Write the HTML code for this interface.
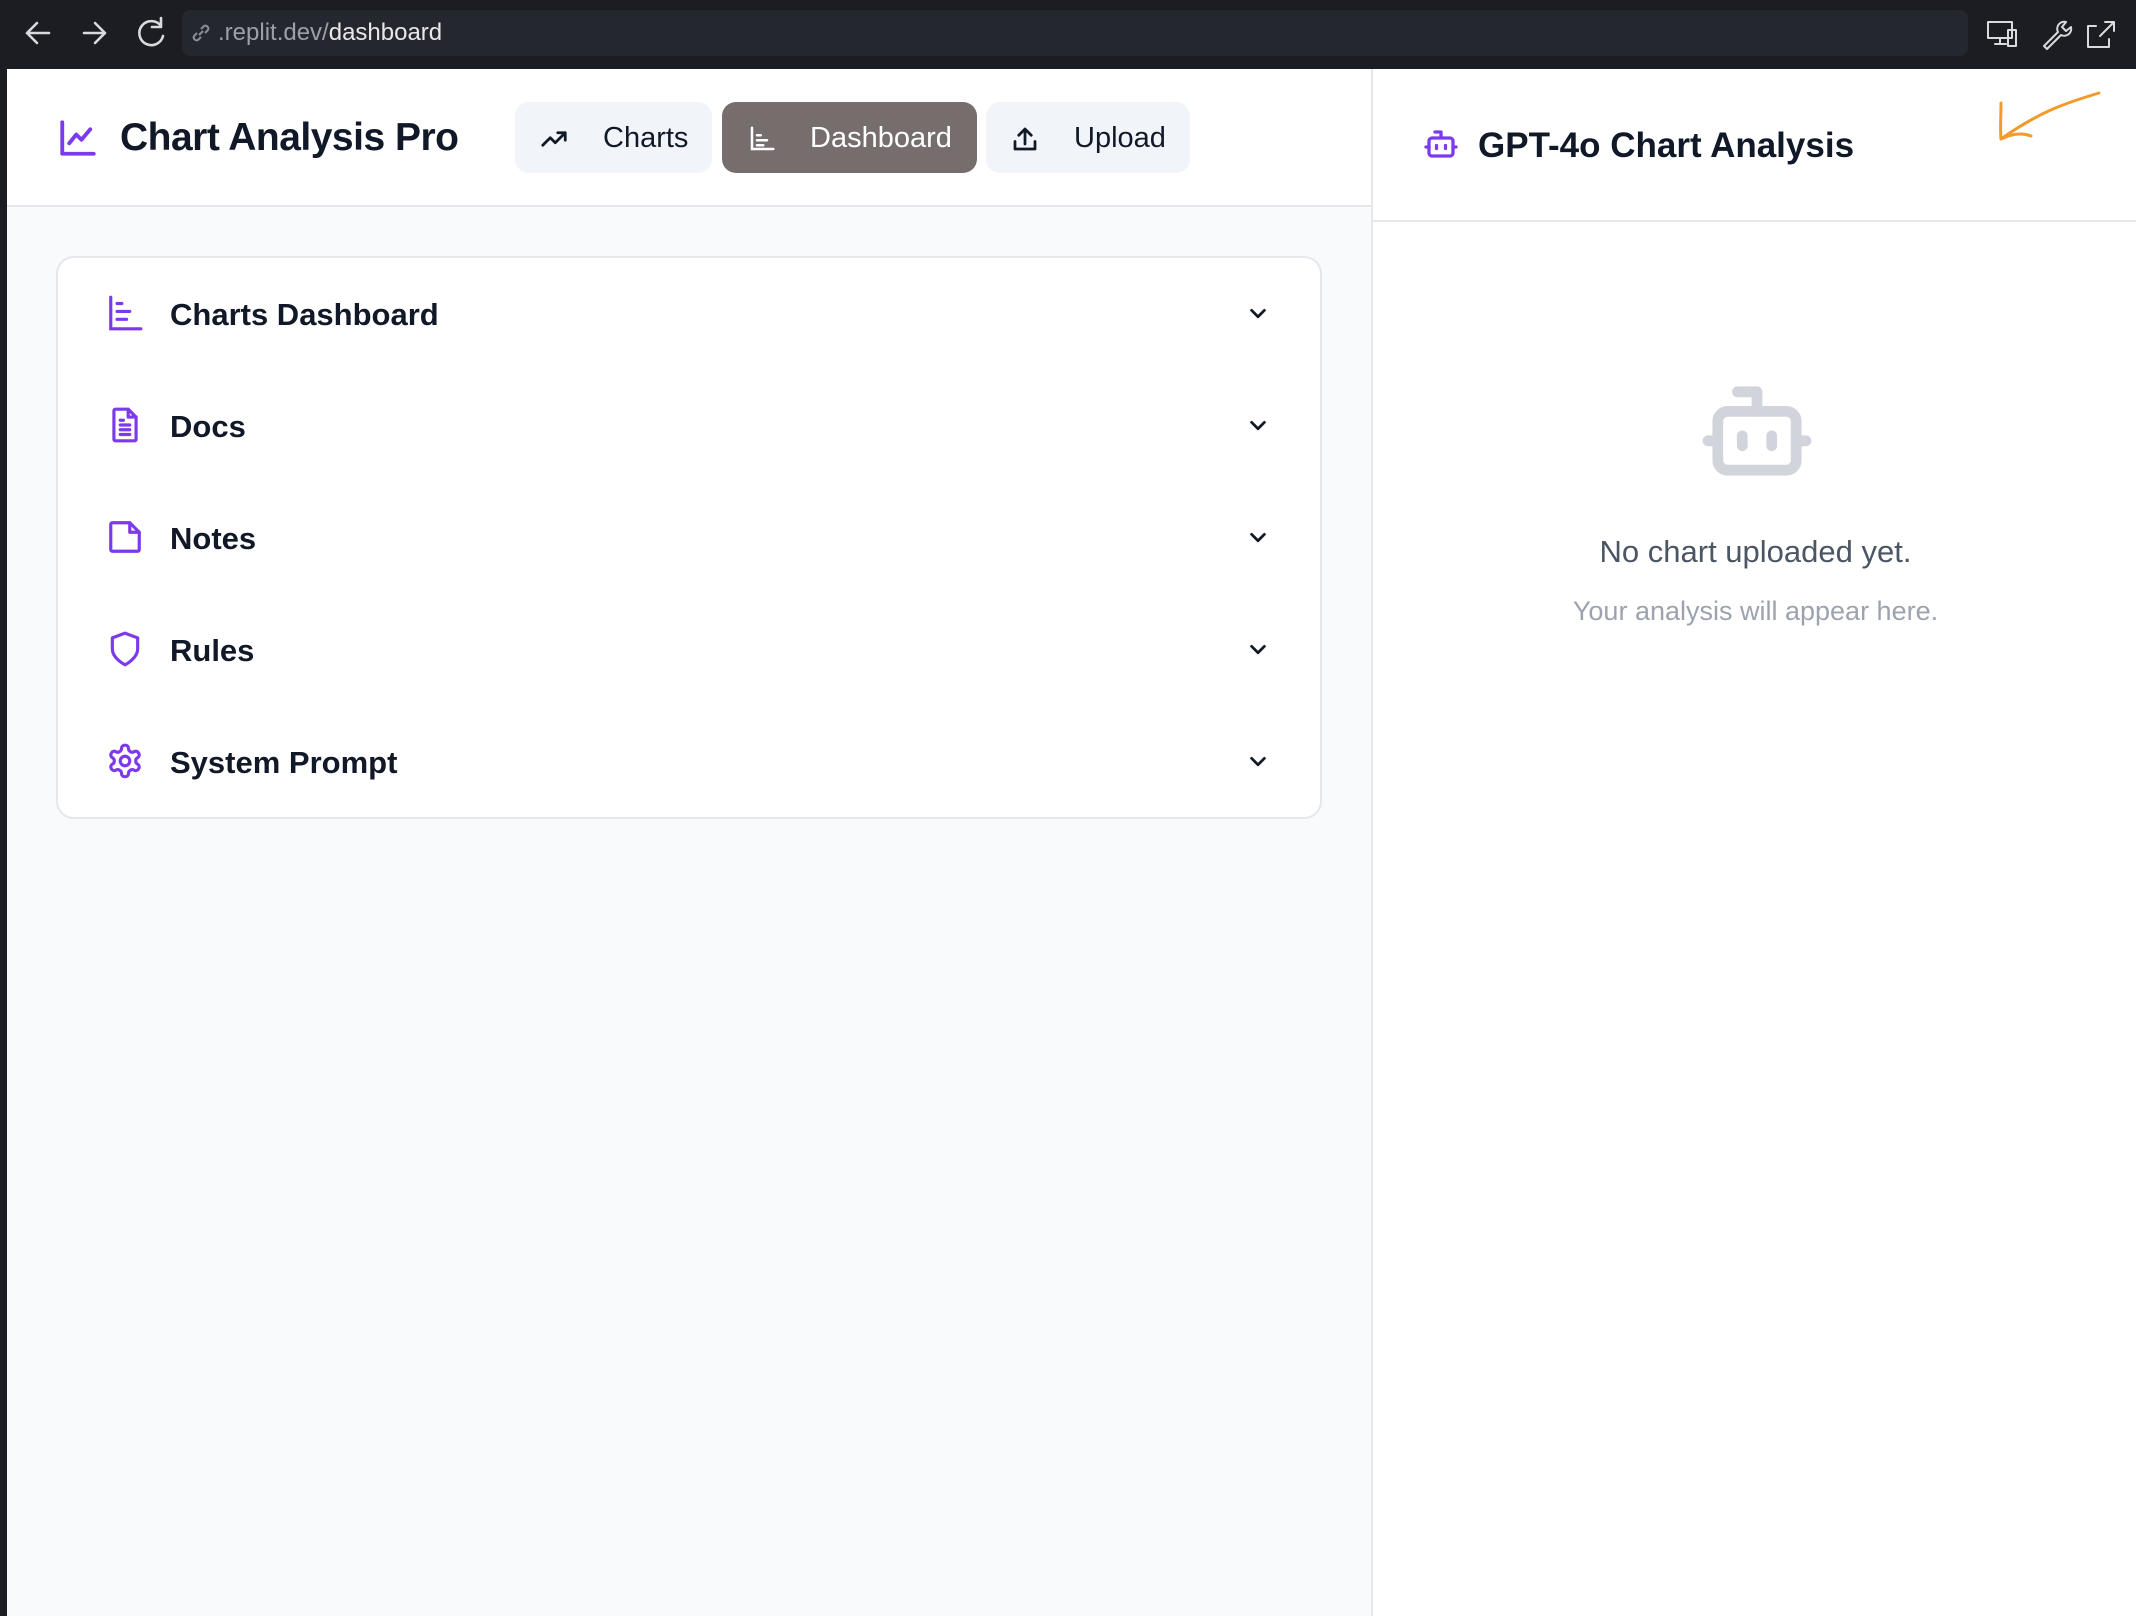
<!DOCTYPE html>
<html><head><meta charset="utf-8"><style>
*{margin:0;padding:0;box-sizing:border-box}
body{width:2136px;height:1616px;overflow:hidden;background:#f8fafc;font-family:"Liberation Sans",sans-serif;position:relative}
.bar{position:absolute;left:0;top:0;width:2136px;height:69px;background:#1b1d22}
.addr{position:absolute;left:182px;top:10px;width:1786px;height:46px;background:#25272e;border-radius:8px}
.addr span{position:absolute;left:36px;top:9px;font-size:24px;color:#9aa0a8}
.addr b{font-weight:normal;color:#e6e8eb}
.lstrip{position:absolute;left:0;top:69px;width:7px;height:1547px;background:#1b1d22}
.left{position:absolute;left:7px;top:69px;width:1364px;height:1547px;background:#f8fafc}
.lhead{position:absolute;left:0;top:0;width:1364px;height:138px;background:#fff;border-bottom:2px solid #e5e7eb}
.title{position:absolute;left:113px;top:47px;font-size:39px;font-weight:bold;color:#111827;letter-spacing:-0.5px}
.btn{position:absolute;top:33px;height:71px;border-radius:14px;background:#f1f5f9;font-size:29px;color:#111827}
.btn span{position:absolute;top:20px}
.btn svg{position:absolute;top:22px}
.card{position:absolute;left:49px;top:187px;width:1266px;height:563px;background:#fff;border:2px solid #e5e7eb;border-radius:18px}
.row{position:absolute;left:0;width:100%;height:60px}
.row svg.i{position:absolute;left:48px;top:10px}
.row span{position:absolute;left:112px;top:13px;font-size:31px;font-weight:bold;color:#111827}
.row svg.c{position:absolute;left:1189px;top:19px}
.right{position:absolute;left:1371px;top:69px;width:765px;height:1547px;background:#fff;border-left:2px solid #e5e7eb}
.rhead{position:absolute;left:0;top:0;width:765px;height:153px;border-bottom:2px solid #e5e7eb}
</style></head><body>
<div class="bar">
<svg width="2136" height="69" style="position:absolute;left:0;top:0" fill="none" stroke="#d8dade" stroke-width="2.6" stroke-linecap="round" stroke-linejoin="round">
<path d="M49 33H27M37 23L27 33L37 43"/>
<path d="M84 33H105M95 23L105 33L95 43"/>
<path d="M161 26A12 12 0 1 0 163 36M161 18V27H152"/>
<g stroke="#8a8f97" stroke-width="2"><path d="M1934 33H1951M1945 27L1951 33L1945 39"/></g>
<path d="M1988 22H2012V38H1988ZM1995 44H2006M2000 38V44M2008 30H2016V46H2008Z" stroke-width="2"/>
<path d="M2044 46L2058 32A7 7 0 0 1 2066 22L2062 27L2066 31L2071 27A7 7 0 0 1 2061 35L2047 49Z" stroke-width="2"/>
<path d="M2096 26H2088V47H2109V39M2100 36L2114 22M2105 22H2114V31" stroke-width="2"/>
</svg>
<div class="addr"><svg width="22" height="22" style="position:absolute;left:8px;top:12px" fill="none" stroke="#8a8f97" stroke-width="2"><path d="M9 13L13 9M7 11L4 14A3 3 0 0 0 8 18L11 15M15 11L18 8A3 3 0 0 0 14 4L11 7"/></svg><span>.replit.dev/<b>dashboard</b></span></div>
</div>
<div class="lstrip"></div>
<div class="left">
 <div class="lhead">
  <svg style="position:absolute;left:50px;top:48px" width="42" height="42" viewBox="0 0 24 24" fill="none" stroke="#7c3aed" stroke-width="2.2" stroke-linecap="round" stroke-linejoin="round"><path d="M3 3v18h18"/><path d="M7 15l4-5 3 3 5-6"/></svg>
  <div class="title">Chart Analysis Pro</div>
  <div class="btn" style="left:508px;width:197px"><svg width="30" height="30" viewBox="0 0 24 24" fill="none" stroke="#111827" stroke-width="2.2" stroke-linecap="round" stroke-linejoin="round" style="left:24px"><path d="M3 17l6-6 4 4 8-8M15 7h6v6"/></svg><span style="left:88px">Charts</span></div>
  <div class="btn" style="left:715px;width:255px;background:#756e6d;color:#fff"><svg width="30" height="30" viewBox="0 0 24 24" fill="none" stroke="#fff" stroke-width="2" stroke-linecap="round" style="left:25px"><path d="M4 3v17h17M8 9h3M8 13h8M8 17h5"/></svg><span style="left:88px">Dashboard</span></div>
  <div class="btn" style="left:979px;width:204px"><svg width="30" height="30" viewBox="0 0 24 24" fill="none" stroke="#111827" stroke-width="2.2" stroke-linecap="round" stroke-linejoin="round" style="left:24px"><path d="M4 14v6h16v-6M12 16V4M7 9l5-5 5 5"/></svg><span style="left:88px">Upload</span></div>
 </div>
 <div class="card">
  <div class="row" style="top:26px"><svg class="i" width="38" height="38" viewBox="0 0 24 24" fill="none" stroke="#7c3aed" stroke-width="2" stroke-linecap="round"><path d="M3 2v20h19M7 6h3M7 11h8M7 16h6"/></svg><span>Charts Dashboard</span><svg class="c" width="22" height="22" viewBox="0 0 24 24" fill="none" stroke="#111827" stroke-width="3" stroke-linecap="round" stroke-linejoin="round"><path d="M5 8l7 7 7-7"/></svg></div>
  <div class="row" style="top:138px"><svg class="i" width="38" height="38" viewBox="0 0 24 24" fill="none" stroke="#7c3aed" stroke-width="2" stroke-linecap="round" stroke-linejoin="round"><path d="M14 2H6a1 1 0 0 0-1 1v18a1 1 0 0 0 1 1h12a1 1 0 0 0 1-1V7z"/><path d="M14 2v5h5M9 12h6M9 15h6M9 18h6M9 9h2"/></svg><span>Docs</span><svg class="c" width="22" height="22" viewBox="0 0 24 24" fill="none" stroke="#111827" stroke-width="3" stroke-linecap="round" stroke-linejoin="round"><path d="M5 8l7 7 7-7"/></svg></div>
  <div class="row" style="top:250px"><svg class="i" width="38" height="38" viewBox="0 0 24 24" fill="none" stroke="#7c3aed" stroke-width="2" stroke-linecap="round" stroke-linejoin="round"><path d="M15 3H4a1 1 0 0 0-1 1v16a1 1 0 0 0 1 1h16a1 1 0 0 0 1-1V9z"/><path d="M15 3v6h6"/></svg><span>Notes</span><svg class="c" width="22" height="22" viewBox="0 0 24 24" fill="none" stroke="#111827" stroke-width="3" stroke-linecap="round" stroke-linejoin="round"><path d="M5 8l7 7 7-7"/></svg></div>
  <div class="row" style="top:362px"><svg class="i" width="38" height="38" viewBox="0 0 24 24" fill="none" stroke="#7c3aed" stroke-width="2" stroke-linecap="round" stroke-linejoin="round"><path d="M12 22s8-4 8-10V5l-8-3-8 3v7c0 6 8 10 8 10z"/></svg><span>Rules</span><svg class="c" width="22" height="22" viewBox="0 0 24 24" fill="none" stroke="#111827" stroke-width="3" stroke-linecap="round" stroke-linejoin="round"><path d="M5 8l7 7 7-7"/></svg></div>
  <div class="row" style="top:474px"><svg class="i" width="38" height="38" viewBox="0 0 24 24" fill="none" stroke="#7c3aed" stroke-width="2" stroke-linecap="round" stroke-linejoin="round"><circle cx="12" cy="12" r="3"/><path d="M12.2 2h-.4a2 2 0 0 0-2 2v.2a2 2 0 0 1-1 1.7l-.4.3a2 2 0 0 1-2 0l-.2-.1a2 2 0 0 0-2.7.7l-.2.4a2 2 0 0 0 .7 2.7l.2.1a2 2 0 0 1 1 1.7v.5a2 2 0 0 1-1 1.7l-.2.1a2 2 0 0 0-.7 2.7l.2.4a2 2 0 0 0 2.7.7l.2-.1a2 2 0 0 1 2 0l.4.3a2 2 0 0 1 1 1.7v.2a2 2 0 0 0 2 2h.4a2 2 0 0 0 2-2v-.2a2 2 0 0 1 1-1.7l.4-.3a2 2 0 0 1 2 0l.2.1a2 2 0 0 0 2.7-.7l.2-.4a2 2 0 0 0-.7-2.7l-.2-.1a2 2 0 0 1-1-1.7v-.5a2 2 0 0 1 1-1.7l.2-.1a2 2 0 0 0 .7-2.7l-.2-.4a2 2 0 0 0-2.7-.7l-.2.1a2 2 0 0 1-2 0l-.4-.3a2 2 0 0 1-1-1.7V4a2 2 0 0 0-2-2z"/></svg><span>System Prompt</span><svg class="c" width="22" height="22" viewBox="0 0 24 24" fill="none" stroke="#111827" stroke-width="3" stroke-linecap="round" stroke-linejoin="round"><path d="M5 8l7 7 7-7"/></svg></div>
 </div>
</div>
<div class="right">
 <div class="rhead">
  <svg style="position:absolute;left:50px;top:57px" width="36" height="36" viewBox="0 0 24 24" fill="none" stroke="#7c3aed" stroke-width="2.2" stroke-linecap="round" stroke-linejoin="round"><path d="M12 8V4H8"/><rect x="4" y="8" width="16" height="12" rx="2"/><path d="M2 14h2M20 14h2M15 13v2M9 13v2"/></svg>
  <div style="position:absolute;left:105px;top:57px;font-size:35px;font-weight:bold;color:#111827">GPT-4o Chart Analysis</div>
  <svg style="position:absolute;left:620px;top:20px" width="120" height="70" fill="none" stroke="#f39a2b" stroke-width="3" stroke-linecap="round" stroke-linejoin="round"><path d="M106 4C80 12 50 20 8 50M8 14C8 28 7 40 8 50C20 44 30 44 38 47"/></svg>
 </div>
 <svg style="position:absolute;left:325px;top:313px" width="118" height="98" viewBox="0 0 24 20" fill="none" stroke="#d1d5db" stroke-width="2.2" stroke-linecap="round" stroke-linejoin="round"><path d="M12 6V2H8"/><rect x="4" y="6" width="16" height="12" rx="2"/><path d="M2 12h2M20 12h2M15 11v2M9 11v2"/></svg>
 <div style="position:absolute;left:0;width:765px;top:465px;text-align:center;font-size:31px;color:#4b5563">No chart uploaded yet.</div>
 <div style="position:absolute;left:0;width:765px;top:527px;text-align:center;font-size:27px;color:#9ca3af">Your analysis will appear here.</div>
</div>
</body></html>
